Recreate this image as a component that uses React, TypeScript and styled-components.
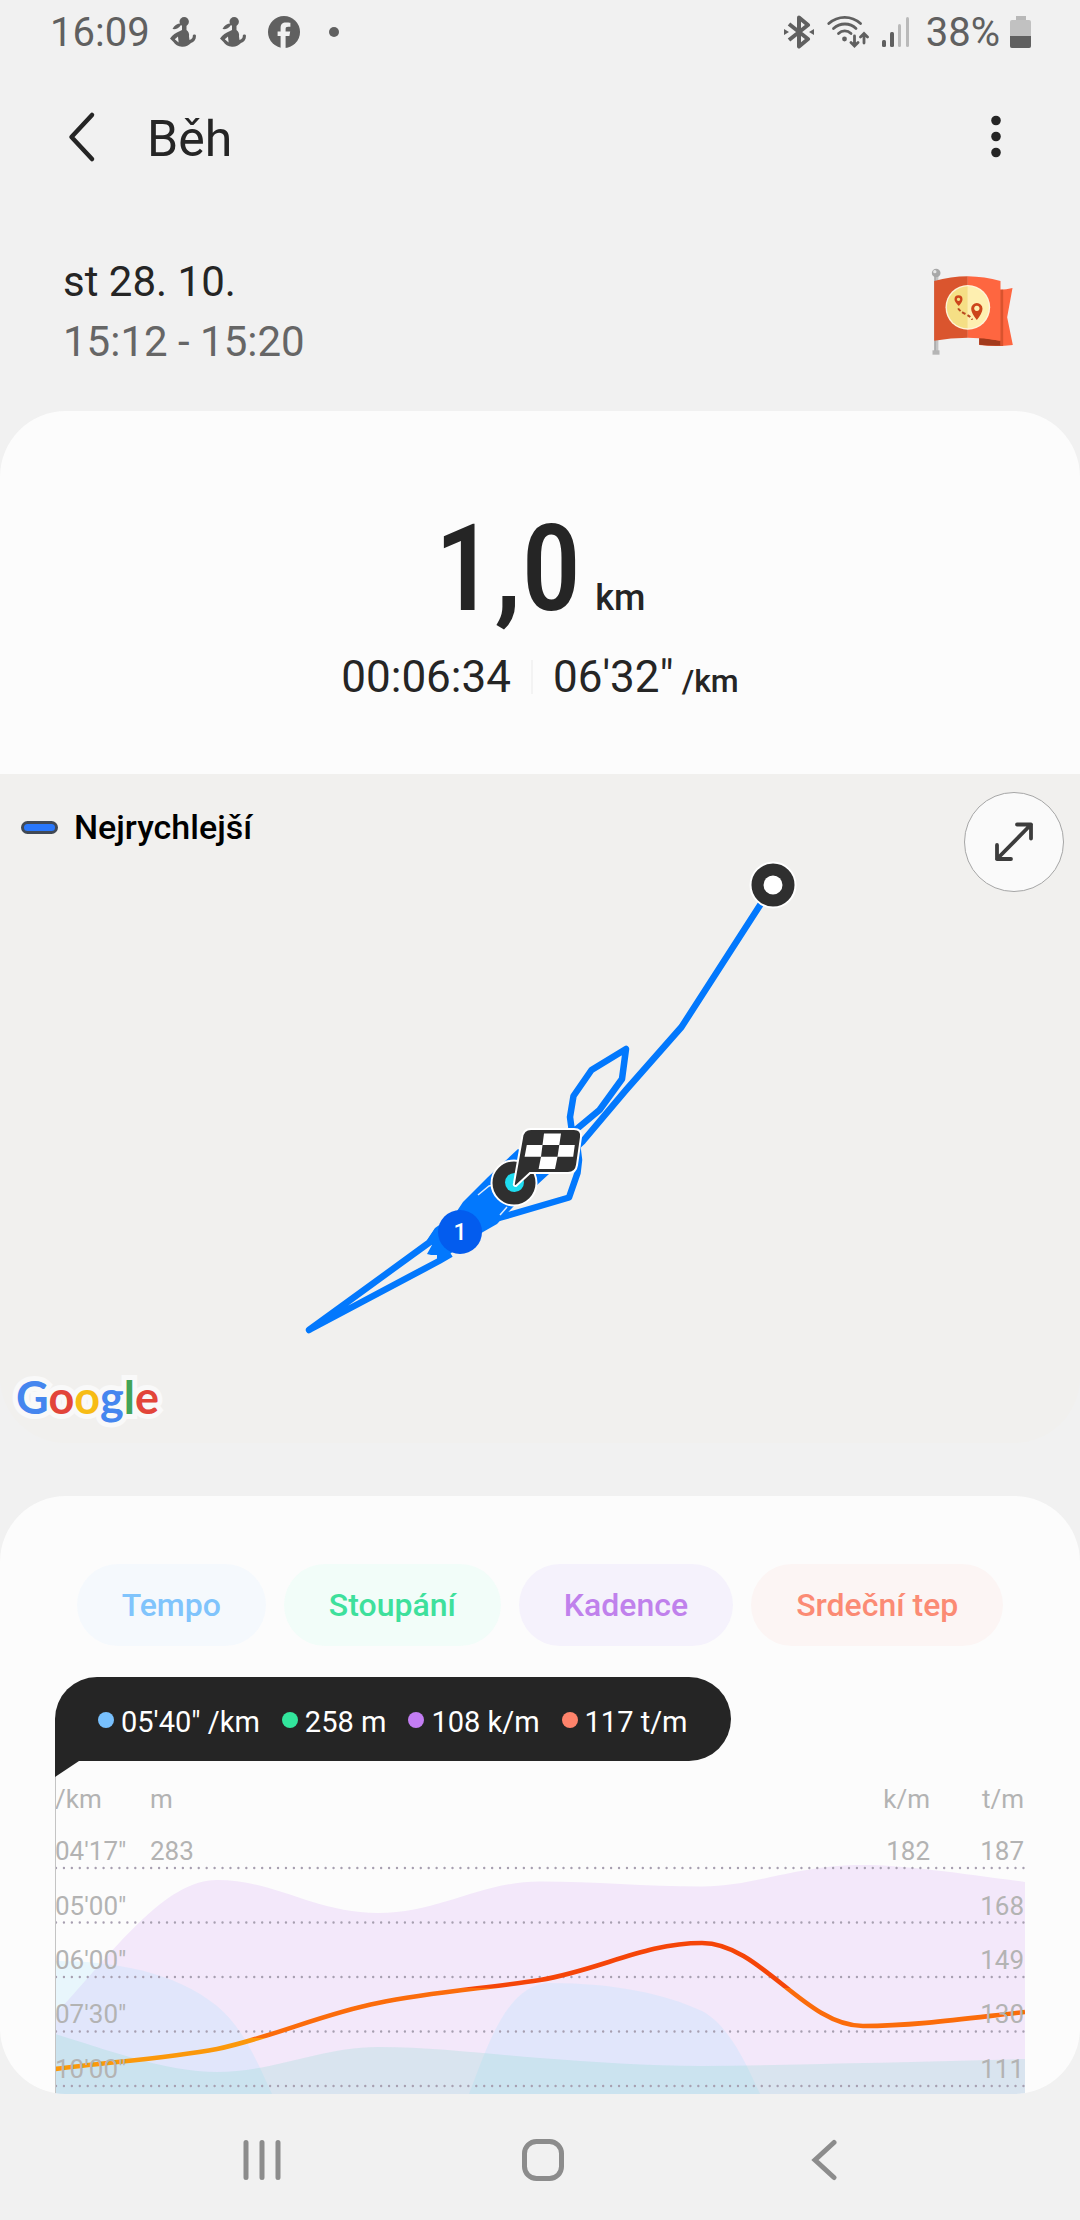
import React from "react";
import styled, { createGlobalStyle } from "styled-components";

const ink = "#252525";
const muted = "#606060";
const sans = `Roboto, "Noto Sans", "Liberation Sans", sans-serif`;

const GlobalStyle = createGlobalStyle`
  * { box-sizing: border-box; }
  body { margin: 0; background: #f1f1f1; font-family: ${sans}; color: ${ink}; }
  button { margin: 0; padding: 0; border: 0; background: none; font: inherit; color: inherit; cursor: pointer; }
  svg { display: block; flex: none; }
  p, h1, h2 { margin: 0; font-weight: 400; }
`;

const Screen = styled.div`
  display: flex;
  flex-direction: column;
`;

const StatusBar = styled.div`
  display: flex;
  align-items: center;
  justify-content: space-between;
  height: 64px;
  padding: 0 48px 0 50px;
  color: ${muted};
  font-size: 40px;
`;

const StatusGroup = styled.div<{ $gap: number }>`
  display: flex;
  align-items: center;
  gap: ${(p) => p.$gap}px;
`;

const NoticeIcons = styled.div`
  display: flex;
  align-items: center;
  gap: 22px;
  height: 60px;
`;

const Header = styled.header`
  display: flex;
  align-items: center;
  height: 146px;
  padding: 0 66px 0 64px;
`;

const IconButton = styled.button`
  display: flex;
  align-items: center;
  justify-content: center;
  width: 36px;
  height: 64px;
`;

const Title = styled.h1`
  flex: 1;
  padding: 4px 0 0 47px;
  font-size: 50px;
  line-height: 64px;
`;

const Summary = styled.section`
  display: flex;
  align-items: center;
  justify-content: space-between;
  padding: 42px 66px 39px 63px;
  font-size: 42px;
  line-height: 60px;
`;

const TimeRange = styled.p`
  color: #666;
`;

const ResultCard = styled.section`
  display: flex;
  flex-direction: column;
  align-items: center;
  height: 363px;
  padding-top: 88px;
  border-radius: 66px 66px 0 0;
  background: #fcfcfc;
`;

const Distance = styled.p`
  display: flex;
  align-items: baseline;
  gap: 14px;
  font-family: "Liberation Sans Narrow", "Roboto Condensed", ${sans};
  font-size: 120px;
  font-weight: 500;
  line-height: 140px;
`;

const Unit = styled.span<{ $size: number }>`
  font-family: ${sans};
  font-size: ${(p) => p.$size}px;
  font-weight: 500;
  line-height: 1;
`;

const Stats = styled.div`
  display: flex;
  align-items: center;
  gap: 20px;
  padding-top: 8px;
  font-size: 44px;
  line-height: 60px;
`;

const Divider = styled.span`
  width: 2px;
  height: 34px;
  background: #f3f3f3;
`;

const Pace = styled.span`
  display: flex;
  align-items: baseline;
  gap: 8px;
`;

const MapPanel = styled.section`
  position: relative;
  overflow: hidden;
  height: 669px;
  border-radius: 0 0 66px 66px;
  background: #f1f0ee;
`;

const MapTop = styled.div`
  position: absolute;
  inset: 0 16px auto 21px;
  display: flex;
  align-items: flex-start;
  justify-content: space-between;
  padding-top: 18px;
`;

const Legend = styled.div`
  display: flex;
  align-items: center;
  gap: 16px;
  height: 70px;
  color: #000;
  font-size: 34px;
  font-weight: 500;
`;

const LegendMark = styled.span`
  width: 37px;
  height: 13px;
  border: 3px solid #414955;
  border-radius: 7px;
  background: #2977fb;
`;

const ExpandButton = styled.button`
  display: flex;
  align-items: center;
  justify-content: center;
  width: 100px;
  height: 100px;
  border: 1px solid #a5a5a5;
  border-radius: 50%;
  background: #fafafa;
`;

const RouteCanvas = styled.svg`
  width: 100%;
  height: 100%;
`;

const MapBrand = styled.div`
  position: absolute;
  left: 16px;
  bottom: 16px;
  isolation: isolate;
  font-family: Lato, ${sans};
  font-size: 45px;
  font-weight: 700;
  line-height: 60px;

  &::before {
    content: "Google";
    position: absolute;
    left: 0;
    top: 0;
    z-index: -1;
    color: #f9f9f9;
    -webkit-text-stroke: 10px #f9f9f9;
  }
`;

const BrandLetter = styled.span<{ $color: string }>`
  color: ${(p) => p.$color};
`;

const ChartCard = styled.section`
  overflow: hidden;
  margin-top: 53px;
  padding: 68px 55px 0;
  border-radius: 66px;
  background: #fcfcfc;
`;

const Chips = styled.div`
  display: flex;
  justify-content: center;
  gap: 18px;
`;

const Chip = styled.button<{ $color: string; $tint: string }>`
  height: 82px;
  padding: 0 45px;
  border-radius: 41px;
  background: ${(p) => p.$tint};
  color: ${(p) => p.$color};
  font-size: 32px;
  font-weight: 500;
  white-space: nowrap;
`;

const Readout = styled.div`
  position: relative;
  display: flex;
  align-items: center;
  gap: 22px;
  width: max-content;
  height: 84px;
  margin-top: 31px;
  padding: 6px 43px 0;
  border-radius: 42px 42px 42px 0;
  background: ${ink};
  color: #fff;
  font-size: 29px;

  &::after {
    content: "";
    position: absolute;
    left: 0;
    top: 100%;
    width: 24px;
    height: 16px;
    background: ${ink};
    clip-path: polygon(0 0, 100% 0, 0 100%);
  }
`;

const ReadoutItem = styled.span`
  display: flex;
  align-items: center;
  gap: 7px;
`;

const Dot = styled.i<{ $color: string }>`
  width: 16px;
  height: 16px;
  margin-bottom: 4px;
  border-radius: 50%;
  background: ${(p) => p.$color};
`;

const Chart = styled.div`
  display: grid;
  grid-template-rows: 333px;
  overflow: hidden;
  border-left: 1px solid #c4c4c4;

  & > * {
    grid-area: 1 / 1;
  }
`;

const Plot = styled.svg`
  align-self: end;
  width: calc(100% + 1px);
  height: 240px;
  margin-left: -1px;
`;

const Axis = styled.div`
  display: grid;
  grid-template-rows: 50px repeat(5, 1fr);
  height: 322px;
  margin: 13px 0 0 -1px;
  color: #b3b3b3;
  font-size: 26px;
`;

const AxisRow = styled.div`
  display: grid;
  grid-template-columns: 95px 1fr 1fr 94px;
  align-items: center;
`;

const Tick = styled.span<{ $end?: boolean }>`
  padding-right: ${(p) => (p.$end ? 1 : 0)}px;
  text-align: ${(p) => (p.$end ? "right" : "left")};
`;

const NavBar = styled.nav`
  display: flex;
  align-items: center;
  justify-content: center;
  gap: 185px;
  height: 126px;
  padding: 6px 0 0 6px;
`;

const NavButton = styled.button`
  display: flex;
  align-items: center;
  justify-content: center;
  width: 96px;
  height: 96px;
`;

const CoachIcon = () => (
  <svg width="28" height="30" viewBox="-2 0 28 30" fill={muted} aria-hidden="true">
    <circle cx="14.200" cy="4.700" r="4.700" />
    <path d="M11 6.500C7 6.500 4 8.500 2.500 12c3 .5 6-.3 8.500-4z" />
    <path
      fillRule="evenodd"
      d="M12 8h4.500v5c2 1.500 3 3.500 2.500 6.500L19.500 23c2.500-.7 3.500-2.500 3.300-4.500.5-1.500 3-1.500 3.200.3 0 4-2 6.200-5 7.200C18.500 28.500 15.500 30 12 29.700 8 29.500 5 27.500 3.500 25L0 21.500C2.500 18 6 15.500 9.500 14.200L12 13zM4.800 22.200l3.800 3.300L8 19.500z"
    />
  </svg>
);

const FacebookIcon = () => (
  <svg width="32" height="32" viewBox="0 0 32 32" aria-hidden="true">
    <circle cx="16" cy="16" r="16" fill={muted} />
    <path
      d="M12.600 32V20H9.600v-4.500h3V12c0-4 2-5.600 5.200-5.600 1.700 0 3.600.2 4.600.4v4h-2.200c-2 0-2.600.8-2.600 2.400v2.300h4.600L21.400 20h-3.800v12z"
      fill="#f1f1f1"
    />
  </svg>
);

const BluetoothIcon = () => (
  <svg width="30" height="34" viewBox="0 0 30 34" aria-hidden="true">
    <path d="M5 9l19 15-9 7.500V2.500L24 10 5 25" fill="none" stroke={muted} strokeWidth="4" strokeLinejoin="round" />
    <path d="M0 14l5 3-5 3zM30 14l-5 3 5 3z" fill={muted} />
  </svg>
);

const WifiIcon = () => (
  <svg width="42" height="34" viewBox="0 0 42 34" fill="none" stroke={muted} strokeLinecap="round" aria-hidden="true">
    <g strokeWidth="2.800">
      <path d="M1.800 8.500C11 .2 24.500.2 33.500 8.500" />
      <path d="M6.500 13.500c6.500-6 16.500-6 22.500 0" />
      <path d="M11.500 18.500c3.500-3.400 9-3.400 12.500 0" />
    </g>
    <circle cx="17.500" cy="24" r="2.400" fill={muted} stroke="none" />
    <path d="M27.500 21v9M24 27.500l3.500 3.500 3.500-3.500M37 28v-9M33.500 22l3.500-3.500 3.500 3.500" strokeWidth="2.800" />
  </svg>
);

const SignalIcon = () => (
  <svg width="28" height="32" viewBox="0 0 28 32" aria-hidden="true">
    <rect x="0" y="24" width="4" height="7" rx="1.500" fill={muted} />
    <rect x="8" y="16" width="4" height="15" rx="1.500" fill={muted} />
    <rect x="16" y="8" width="3" height="23" rx="1.500" fill="#bababa" />
    <rect x="24" y="1" width="3" height="30" rx="1.500" fill="#bababa" />
  </svg>
);

const BatteryIcon = () => (
  <svg width="22" height="34" viewBox="0 0 22 34" aria-hidden="true">
    <path d="M6 1h10v4H6z" fill="#b8b8b8" />
    <rect x="0" y="5" width="21" height="28" rx="2" fill="#c1c1c1" />
    <path d="M0 21h21v10a2 2 0 0 1-2 2H2a2 2 0 0 1-2-2z" fill={muted} />
  </svg>
);

const FlagIcon = () => (
  <svg width="83" height="88" viewBox="152 110 248 264" aria-hidden="true">
    <path d="M161 134h12v226h-12z" fill="#a9a9a9" />
    <path d="M166 134h7v226h-7z" fill="#c3c3c3" />
    <circle cx="167" cy="125" r="13" fill="#a8a8a8" />
    <circle cx="163" cy="121" r="5" fill="#e6e6e6" />
    <path d="M156 357h21v13h-21z" fill="#b5b5b5" />
    <path d="M358 175q20 0 38-5l-16 88 17 83q-48 6-101 0v-22h62z" fill="#fe6640" />
    <path d="M358 175h10v169h-10z" fill="#d9532e" />
    <path d="M296 318l63 10v15q-31 1-63-3z" fill="#a23a1c" />
    <path d="M161 149q50-14 101-14v184q-51 0-101 9z" fill="#da552e" />
    <path d="M262 135q50 1 98 14v179q-48-9-98-9z" fill="#fe6640" />
    <circle cx="262" cy="228" r="67" fill="#fff3d8" />
    <path d="M262 165a63 63 0 0 0 0 126z" fill="#f5df85" />
    <path d="M262 165a63 63 0 0 1 0 126z" fill="#feefb0" />
    <g fill="#cd451b">
      <path fillRule="evenodd" d="M235 224q-13-12-13-20a12 12 0 0 1 24 0q0 8-11 20zM234 199a5 5 0 1 0 .1 0z" />
      <path fillRule="evenodd" d="M289 266q-17-22-17-34a17 17 0 0 1 34 0q0 12-17 34zM289 223a8 8 0 1 0 .1 0z" />
    </g>
    <path d="M233 231q4 8 22 17t20 17" fill="none" stroke="#b94a20" strokeWidth="6" strokeDasharray="11 6" />
  </svg>
);

const RouteMap = () => (
  <RouteCanvas viewBox="0 0 1080 669" preserveAspectRatio="xMidYMid meet" role="img" aria-label="Trasa">
    <g fill="none" stroke="#0278fd" strokeWidth="6.500" strokeLinejoin="round">
      <path d="M773 111L681.500 253 626 316 583 367 560 388" />
      <path d="M572 358l-2-15 3.500-21L591.500 296l34.500-21-4 30-22.500 31-24 20" />
      <path d="M577 370l2 16-1.500 13-8.500 24.500L499 444" />
      <path d="M451 480L439 487 309 556 430 468l8-12" />
    </g>
    <path
      d="M518 375l-30 28-25 25-8 12-20 14-8 12 5 5-5 9 4 1h6v8l14-10 32-21 14-8 16-17 36-33-10-10z"
      fill="#0278fd"
    />
    <path d="M478 421l11-9 9-2M500 441l7-8" fill="none" stroke="#dceafb" strokeWidth="1.500" />
    <g stroke="#fff" strokeWidth="2">
      <circle cx="773" cy="111" r="22.500" fill="#2f2f2f" />
      <circle cx="514" cy="409" r="22.500" fill="#2f2f2f" />
    </g>
    <circle cx="773" cy="111" r="9.500" fill="#fff" />
    <circle cx="514.500" cy="408.500" r="9.500" fill="#1fdcf0" />
    <path
      d="M531 355h43q8 0 7 8l-4 28q-1 8-9 8h-38l-14 13q-3 0-2-3l8-45q1-9 9-9z"
      fill="#2f2f2f"
      stroke="#fff"
      strokeWidth="2"
    />
    <path
      d="M544 359.500h17L559.300 371h-16.800zM526.800 371h15.700L541 382.700h-16.400zM559.300 371h15.500l-1.600 11.700h-15.700zM541 382.700h16.500L555 395h-16.400z"
      fill="#fff"
    />
    <circle cx="460" cy="458" r="22" fill="#035cee" />
    <text x="460" y="466" textAnchor="middle" fill="#fff" fontSize="23" fontWeight="500" fontFamily="Roboto, sans-serif">
      1
    </text>
  </RouteCanvas>
);

const gridLines = [14, 68.5, 123, 177.5, 232];

const RunPlot = () => (
  <Plot viewBox="0 0 970 240" preserveAspectRatio="none" role="img" aria-label="Graf běhu">
    <defs>
      <linearGradient id="zones" gradientUnits="userSpaceOnUse" x1="0" y1="0" x2="0" y2="240">
        <stop offset="0.560" stopColor="#f54508" />
        <stop offset="0.560" stopColor="#fb6c0b" />
        <stop offset="0.765" stopColor="#fb6c0b" />
        <stop offset="0.765" stopColor="#fb980b" />
      </linearGradient>
    </defs>
    <path
      fill="#f3e8fa"
      d="M0 161C60 95 110 26 162 26 220 26 260 59 323 59 385 59 425 27.500 485 27.500 540 27.500 590 32.500 647 32.500 700 32.500 740 11 808 11 850 11 910 20 970 28V240H0z"
    />
    <path
      fill="rgba(157,227,255,.2)"
      d="M0 107C60 107 120 118 162 152 190 175 205 215 217 240H0zM414 240C430 200 450 129 495 129 560 129 610 140 647 157 675 172 692 212 705 240z"
    />
    <path
      fill="rgba(113,217,195,.2)"
      d="M0 180C50 195 110 218 162 218 220 218 265 193 323 193 380 193 430 200 485 204 540 208 590 212 647 212 700 212 755 210 808 209 860 208 920 206 970 205V240H0z"
    />
    <g stroke="#a79fb0" strokeWidth="2.400" strokeLinecap="round" strokeDasharray="0 7.930">
      {gridLines.map((y) => (
        <line key={y} x1="1" x2="970" y1={y} y2={y} />
      ))}
    </g>
    <path
      fill="none"
      stroke="url(#zones)"
      strokeWidth="4.600"
      d="M0 215C55 208 115 204 162 195 215 184 270 159 323 149 375 138 435 134 485 126 545 116 590 89 647 89 705 89 750 172 808 172 860 172 915 164 970 158"
    />
  </Plot>
);

const metrics = [
  { name: "Tempo", color: "#80c4fc", tint: "#f5f9fd", dot: "#78c0fd", value: "05'40\" /km" },
  { name: "Stoupání", color: "#3ee09c", tint: "#f2fdf9", dot: "#32e59c", value: "258 m" },
  { name: "Kadence", color: "#c081ec", tint: "#f5f2fc", dot: "#c37df3", value: "108 k/m" },
  { name: "Srdeční tep", color: "#fb8b74", tint: "#fcf5f4", dot: "#fe836b", value: "117 t/m" },
];

const axisRows = [
  ["/km", "m", "k/m", "t/m"],
  ["04'17\"", "283", "182", "187"],
  ["05'00\"", "", "", "168"],
  ["06'00\"", "", "", "149"],
  ["07'30\"", "", "", "130"],
  ["10'00\"", "", "", "111"],
];

const brand: [string, string][] = [
  ["G", "#4586ef"],
  ["o", "#e2453a"],
  ["o", "#f7bc15"],
  ["g", "#4586ef"],
  ["l", "#42a458"],
  ["e", "#e2453a"],
];

export default function App() {
  return (
    <Screen>
      <GlobalStyle />
      <StatusBar>
        <StatusGroup $gap={18}>
          <span>16:09</span>
          <NoticeIcons>
            <CoachIcon />
            <CoachIcon />
            <FacebookIcon />
            <svg width="40" height="10" viewBox="0 0 40 10" aria-hidden="true">
              <circle cx="12" cy="5" r="5" fill={muted} />
            </svg>
          </NoticeIcons>
        </StatusGroup>
        <StatusGroup $gap={16}>
          <StatusGroup $gap={13}>
            <BluetoothIcon />
            <WifiIcon />
            <SignalIcon />
          </StatusGroup>
          <StatusGroup $gap={10}>
            <span>38%</span>
            <BatteryIcon />
          </StatusGroup>
        </StatusGroup>
      </StatusBar>

      <Header>
        <IconButton aria-label="Zpět">
          <svg width="36" height="52" viewBox="0 0 36 52" fill="none" stroke={ink} strokeWidth="4.500" strokeLinecap="round" strokeLinejoin="round">
            <path d="M28 4L7.500 26 28 48" />
          </svg>
        </IconButton>
        <Title>Běh</Title>
        <IconButton aria-label="Další možnosti">
          <svg width="10" height="44" viewBox="0 0 10 44" fill={ink}>
            <circle cx="5" cy="5.500" r="4.800" />
            <circle cx="5" cy="21.500" r="4.800" />
            <circle cx="5" cy="37.500" r="4.800" />
          </svg>
        </IconButton>
      </Header>

      <Summary>
        <div>
          <p>st 28. 10.</p>
          <TimeRange>15:12 - 15:20</TimeRange>
        </div>
        <FlagIcon />
      </Summary>

      <ResultCard>
        <Distance>
          1,0<Unit $size={36}>km</Unit>
        </Distance>
        <Stats>
          <span>00:06:34</span>
          <Divider />
          <Pace>
            06'32"<Unit $size={32}>/km</Unit>
          </Pace>
        </Stats>
      </ResultCard>

      <MapPanel>
        <RouteMap />
        <MapTop>
          <Legend>
            <LegendMark />
            Nejrychlejší
          </Legend>
          <ExpandButton aria-label="Zvětšit mapu">
            <svg width="42" height="42" viewBox="0 0 42 42" fill="none" stroke="#3c3c3c" strokeWidth="3.800" strokeLinecap="round" strokeLinejoin="round">
              <path d="M24 3.500h14v14M38 3.500L4 38M4 24v14h14" />
            </svg>
          </ExpandButton>
        </MapTop>
        <MapBrand>
          {brand.map(([letter, color], i) => (
            <BrandLetter key={i} $color={color}>
              {letter}
            </BrandLetter>
          ))}
        </MapBrand>
      </MapPanel>

      <ChartCard>
        <Chips>
          {metrics.map((m) => (
            <Chip key={m.name} $color={m.color} $tint={m.tint}>
              {m.name}
            </Chip>
          ))}
        </Chips>
        <Readout>
          {metrics.map((m) => (
            <ReadoutItem key={m.name}>
              <Dot $color={m.dot} />
              {m.value}
            </ReadoutItem>
          ))}
        </Readout>
        <Chart>
          <RunPlot />
          <Axis>
            {axisRows.map((row) => (
              <AxisRow key={row[0]}>
                {row.map((label, i) => (
                  <Tick key={i} $end={i > 1}>
                    {label}
                  </Tick>
                ))}
              </AxisRow>
            ))}
          </Axis>
        </Chart>
      </ChartCard>

      <NavBar>
        <NavButton aria-label="Poslední aplikace">
          <svg width="40" height="42" viewBox="0 0 40 42" stroke="#8c8c8c" strokeWidth="5" strokeLinecap="round">
            <path d="M4 3.500v35M20 3.500v35M36 3.500v35" />
          </svg>
        </NavButton>
        <NavButton aria-label="Domů">
          <svg width="42" height="42" viewBox="0 0 42 42" fill="none" stroke="#8c8c8c" strokeWidth="5">
            <rect x="2.500" y="2.500" width="37" height="37" rx="12" />
          </svg>
        </NavButton>
        <NavButton aria-label="Zpět">
          <svg width="26" height="42" viewBox="0 0 26 42" fill="none" stroke="#8c8c8c" strokeWidth="5" strokeLinecap="round">
            <path d="M23 3.500L4 21l19 17.500" />
          </svg>
        </NavButton>
      </NavBar>
    </Screen>
  );
}
